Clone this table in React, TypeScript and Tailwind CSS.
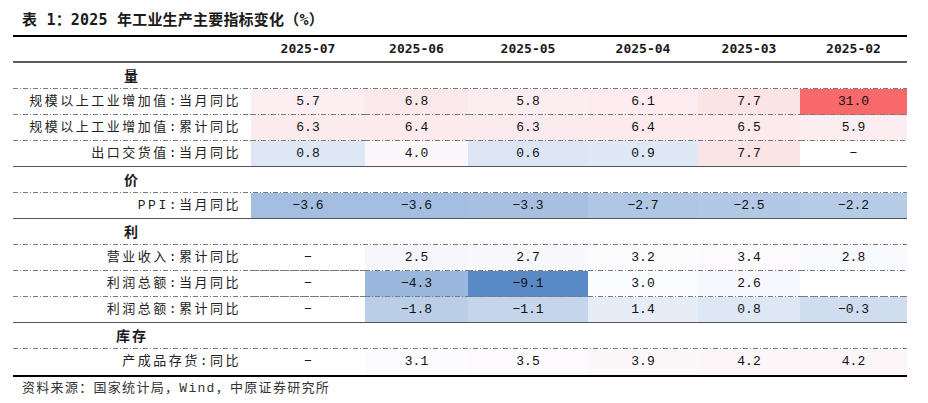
import React from 'react';

type Val = number | '-' | null;
type Row = { label: string; values: Val[] };
type Section = { title: string; rows: Row[] };

const months = ['2025-07', '2025-06', '2025-05', '2025-04', '2025-03', '2025-02'];

const sections: Section[] = [
  {
    title: '量',
    rows: [
      { label: '规模以上工业增加值:当月同比', values: [5.7, 6.8, 5.8, 6.1, 7.7, 31.0] },
      { label: '规模以上工业增加值:累计同比', values: [6.3, 6.4, 6.3, 6.4, 6.5, 5.9] },
      { label: '出口交货值:当月同比', values: [0.8, 4.0, 0.6, 0.9, 7.7, '-'] },
    ],
  },
  {
    title: '价',
    rows: [{ label: 'PPI:当月同比', values: [-3.6, -3.6, -3.3, -2.7, -2.5, -2.2] }],
  },
  {
    title: '利',
    rows: [
      { label: '营业收入:累计同比', values: ['-', 2.5, 2.7, 3.2, 3.4, 2.8] },
      { label: '利润总额:当月同比', values: ['-', -4.3, -9.1, 3.0, 2.6, null] },
      { label: '利润总额:累计同比', values: ['-', -1.8, -1.1, 1.4, 0.8, -0.3] },
    ],
  },
  {
    title: '库存',
    rows: [{ label: '产成品存货:同比', values: ['-', 3.1, 3.5, 3.9, 4.2, 4.2] }],
  },
];

// excel style 3-colour scale: blue (min) -> white (median) -> red (max)
const MIN = -9.1;
const MID = 3.05;
const MAX = 31.0;
const WHITE = [252, 252, 255];
const RED = [248, 105, 107];
const BLUE = [90, 138, 198];

function heat(v: Val): string | undefined {
  if (typeof v !== 'number') return undefined;
  const to = v >= MID ? RED : BLUE;
  const t = v >= MID ? (v - MID) / (MAX - MID) : (MID - v) / (MID - MIN);
  const c = WHITE.map((w, i) => Math.round(w + (to[i] - w) * t));
  return `rgb(${c[0]}, ${c[1]}, ${c[2]})`;
}

const dashLine =
  'bg-[image:repeating-linear-gradient(90deg,#7a7a7a_0_5px,transparent_5px_7px,#7a7a7a_7px_8px,transparent_8px_10px)] bg-no-repeat bg-bottom bg-[length:100%_1px]';
const solidLine =
  'bg-[image:linear-gradient(#555555,#555555)] bg-no-repeat bg-bottom bg-[length:100%_1px]';
const headLine =
  'bg-[image:linear-gradient(#5c5c5c,#5c5c5c)] bg-no-repeat bg-bottom bg-[length:100%_2px]';

const grid = 'grid grid-cols-[238px_114px_103px_120px_110px_102px_107px] h-[26px]';
const mono = "font-['Liberation_Mono','Noto_Sans_CJK_SC',monospace]";

function fmt(v: Val) {
  if (v === null) return '';
  if (v === '-') return '\u2212';
  return v < 0 ? `\u2212${Math.abs(v).toFixed(1)}` : v.toFixed(1);
}

export default function App() {
  return (
    <div className="w-[928px] h-[403px] bg-white text-[#1a1a1a] overflow-hidden">
      {/* Title */}
      <div className="h-[35px] pt-[10px] pl-[22px] text-[15px] leading-[20px] font-bold font-['DejaVu_Sans_Mono','Noto_Sans_CJK_SC',monospace] tracking-[0.2px]">
        表 1：2025 年工业生产主要指标变化（%）
      </div>

      {/* Table */}
      <div className="ml-[13px] w-[894px] border-t-2 border-b-2 border-black">
        <div className={`${grid} ${headLine}`}>
          <div />
          {months.map((m) => (
            <div
              key={m}
              className="flex items-center justify-center pb-[2px] text-[13px] font-bold font-['DejaVu_Sans_Mono',monospace]"
            >
              {m}
            </div>
          ))}
        </div>

        {sections.map((s, si) => (
          <React.Fragment key={s.title}>
            <div className={`${grid} ${dashLine}`}>
              <div className="flex items-center justify-center pb-px text-[14px] font-bold font-['Noto_Sans_CJK_SC',sans-serif] tracking-[2px]">
                {s.title}
              </div>
            </div>
            {s.rows.map((r, ri) => {
              const last = ri === s.rows.length - 1;
              const isEnd = last && si === sections.length - 1;
              const line = isEnd ? '' : last ? solidLine : dashLine;
              return (
                <div key={r.label} className={`${grid} ${line}`}>
                  <div
                    className={`flex items-center justify-end pr-[10px] pb-px text-[13px] tracking-[2.5px] text-[#222] ${mono} ${line}`}
                  >
                    {r.label}
                  </div>
                  {r.values.map((v, i) => (
                    <div
                      key={i}
                      style={{ backgroundColor: heat(v) }}
                      className={`flex items-center justify-center pb-px text-[13px] text-[#111] ${mono} ${line}`}
                    >
                      {fmt(v)}
                    </div>
                  ))}
                </div>
              );
            })}
          </React.Fragment>
        ))}
      </div>

      {/* Source */}
      <div className={`mt-[4px] pl-[22px] text-[13px] leading-[16px] tracking-[1.3px] text-[#333] ${mono}`}>
        资料来源：国家统计局，Wind，中原证券研究所
      </div>
    </div>
  );
}
